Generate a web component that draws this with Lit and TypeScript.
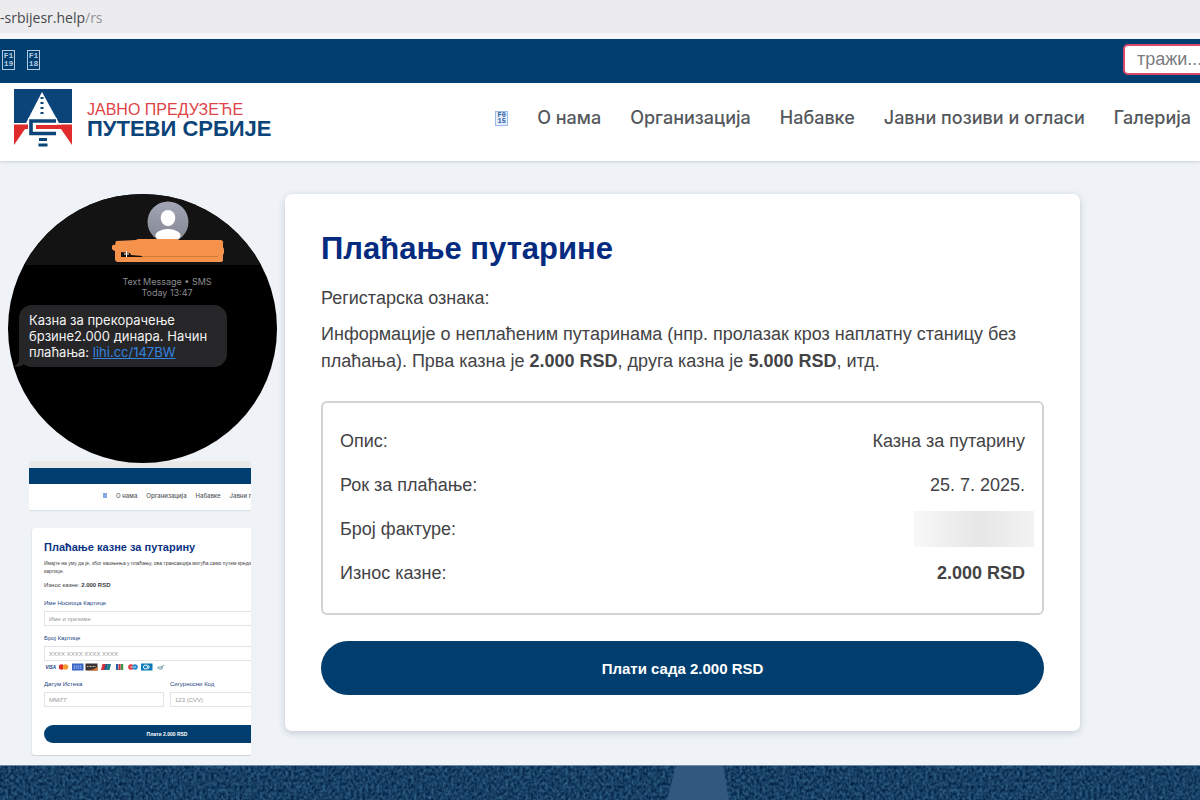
import { LitElement, html, css, svg } from "lit";
import { customElement, property } from "lit/decorators.js";

const NAV = ["О нама", "Организација", "Набавке", "Јавни позиви и огласи", "Галерија"];

@customElement("glyph-box")
class GlyphBox extends LitElement {
  @property() top = "F1";
  @property() bottom = "19";

  static styles = css`
    :host {
      display: inline-grid;
      box-sizing: border-box;
      width: 13px;
      height: 20px;
      align-content: center;
      justify-items: center;
      border: 1px solid currentColor;
      font: bold 8px/8px "Liberation Mono", monospace;
    }
  `;

  render() {
    return html`<span>${this.top}</span><span>${this.bottom}</span>`;
  }
}

@customElement("site-header")
class SiteHeader extends LitElement {
  static styles = css`
    :host {
      display: block;
      background: #fff;
      font-family: "Liberation Sans", Arial, sans-serif;
      box-shadow: 0 1px 3px #c9ced6;
    }
    .address {
      box-sizing: border-box;
      height: 39px;
      background: #ececee;
      border-bottom: 6px solid #f6f7fa;
      font: 14px/35px "Open Sans", sans-serif;
      color: #47474b;
    }
    .path {
      color: #939397;
    }
    .top {
      display: flex;
      align-items: center;
      box-sizing: border-box;
      height: 44px;
      padding: 0 0 3px 2px;
      overflow: hidden;
      background: #013e70;
    }
    .social {
      display: flex;
      gap: 12px;
    }
    .social a {
      display: flex;
      color: #b5cbe0;
      text-decoration: none;
    }
    .search {
      box-sizing: border-box;
      width: 180px;
      height: 31px;
      margin: 0 -103px 0 auto;
      padding: 0 12px;
      border: 2px solid #d8486c;
      border-radius: 5px;
      background: #fff;
      font: 18px "Liberation Sans", Arial, sans-serif;
    }
    .search::placeholder {
      color: #7b7b80;
    }
    .bar {
      display: flex;
      align-items: center;
      justify-content: space-between;
      height: 78px;
      padding: 0 9px 0 14px;
    }
    .brand {
      display: flex;
      gap: 15px;
      align-items: center;
      margin-bottom: 9px;
      text-decoration: none;
    }
    .brand svg {
      width: 58px;
      height: 58px;
    }
    .name {
      display: grid;
      padding-top: 3px;
      white-space: nowrap;
      color: #e04347;
      font-size: 16px;
      line-height: 19px;
    }
    .name strong {
      color: #0b4479;
      font-size: 22px;
      line-height: 19px;
    }
    nav {
      display: flex;
      align-items: center;
      gap: 29px;
      margin-bottom: 8px;
      white-space: nowrap;
      font: 500 18px/24px Inter, sans-serif;
    }
    nav a {
      color: #54585c;
      text-decoration: none;
    }
    nav a.home {
      display: flex;
      color: #2f5fa8;
    }
    .home glyph-box {
      height: 15px;
      font-size: 7px;
      line-height: 6px;
      border-color: #9db9ea;
      background: #e4edfb;
    }
  `;

  render() {
    return html`
      <div class="address">-srbijesr.help<span class="path">/rs</span></div>
      <div class="top">
        <div class="social">
          <a href="#"><glyph-box top="F1" bottom="19"></glyph-box></a>
          <a href="#"><glyph-box top="F1" bottom="18"></glyph-box></a>
        </div>
        <input class="search" type="search" placeholder="тражи..." aria-label="тражи" />
      </div>
      <div class="bar">
        <a class="brand" href="#">
          <svg viewBox="0 0 58 58" aria-hidden="true">
            <path d="M0 0H58V34H0Z" fill="#0b4479" />
            <path d="M28 3L12 34H45Z" fill="#fff" />
            <path d="M0 35.500H58V56L47 40H11L0 56Z" fill="#df2b2b" />
            <path d="M14 40V29H43V35.500H47V40H43V48H14Z" fill="#fff" />
            <path d="M22 36H58V40H22Z" fill="#df2b2b" />
            <path d="M42 32H17V44.500H42" fill="none" stroke="#0b4479" stroke-width="3.600" />
            <path d="M28 8V28" stroke="#0b4479" stroke-width="3" stroke-dasharray="2 3" />
            <path d="M25 50.500H33M24.500 56H33.500" stroke="#0b4479" stroke-width="2.800" />
          </svg>
          <span class="name"><span>ЈАВНО ПРЕДУЗЕЋЕ</span><strong>ПУТЕВИ СРБИЈЕ</strong></span>
        </a>
        <nav>
          <a class="home" href="#"><glyph-box top="F0" bottom="15"></glyph-box></a>
          ${NAV.map((label) => html`<a href="#">${label}</a>`)}
        </nav>
      </div>
    `;
  }
}

@customElement("sms-bubble")
class SmsBubble extends LitElement {
  static styles = css`
    :host {
      display: block;
      position: relative;
      z-index: 1;
      box-sizing: border-box;
      aspect-ratio: 1;
      overflow: hidden;
      border-radius: 50%;
      background: #000;
      font-family: Inter, sans-serif;
    }
    .contact {
      display: grid;
      justify-items: center;
      align-content: start;
      box-sizing: border-box;
      height: 71px;
      padding: 7px 0 0 50px;
      background: #131313;
    }
    .avatar {
      width: 42px;
      height: 42px;
    }
    .redaction {
      width: 112px;
      height: 24px;
      margin-top: -4px;
    }
    .meta {
      margin: 0;
      padding: 11px 0 7px 49px;
      text-align: center;
      color: #8b8b8f;
      font-size: 9px;
      line-height: 11px;
    }
    .row {
      display: flex;
      align-items: end;
    }
    .tail {
      width: 18px;
      height: 14px;
      margin-right: -7px;
    }
    .message {
      box-sizing: border-box;
      width: 208px;
      margin: 0;
      padding: 7px 10px;
      border-radius: 13px;
      background: #262628;
      color: #f2f2f3;
      font-size: 13px;
      line-height: 16px;
      white-space: nowrap;
    }
    .message a {
      color: #3284e0;
    }
  `;

  render() {
    return html`
      <div class="contact">
        <svg class="avatar" viewBox="0 0 42 42" aria-hidden="true">
          <defs>
            <linearGradient id="g" x2="0" y2="1">
              <stop stop-color="#a3a7b5" />
              <stop offset="1" stop-color="#828591" />
            </linearGradient>
            <clipPath id="c"><circle cx="21" cy="21" r="20.500" /></clipPath>
          </defs>
          <circle cx="21" cy="21" r="20.500" fill="url(#g)" />
          <g clip-path="url(#c)" fill="#fff">
            <ellipse cx="21" cy="17" rx="7.300" ry="8" />
            <ellipse cx="21" cy="34.500" rx="12.500" ry="6.500" />
          </g>
        </svg>
        <svg class="redaction" viewBox="0 0 112 24" aria-hidden="true">
          <path
            d="M4 2L24 1Q25 0 27 0H65L67 1H109Q112 2 111 4V8L112 10V14L111 16V21Q111 23 108 23H6Q3 23 3 20V12Q-1 11 0 7Q1 5 3 6Z"
            fill="#f5924c"
          />
          <path d="M9 13L18 14L19 16L30 17V18H9Z" fill="#1b120c" />
          <path d="M30 17.500H106" stroke="#c9712f" stroke-width=".8" />
          <path d="M14.500 12V18M12 15H17" stroke="#fff" />
        </svg>
      </div>
      <p class="meta">Text Message • SMS<br />Today 13:47</p>
      <div class="row">
        <svg class="tail" viewBox="0 0 18 14" aria-hidden="true">
          <path d="M11 0V6Q11 12 5 13Q12 15 16 11L18 12V0Z" fill="#262628" />
        </svg>
        <p class="message">
          Казна за прекорачење<br />брзине2.000 динара. Начин<br />плаћања: <a href="#">lihi.cc/147BW</a>
        </p>
      </div>
    `;
  }
}

@customElement("page-thumbnail")
class PageThumbnail extends LitElement {
  static styles = css`
    :host {
      display: block;
      overflow: hidden;
      font-family: "Liberation Sans", Arial, sans-serif;
      color: #3c3c40;
      font-size: 5px;
      line-height: 8px;
    }
    .address {
      height: 7px;
      background: #e9e9ea;
    }
    .top {
      height: 16px;
      background: #013e70;
    }
    nav {
      display: flex;
      gap: 9px;
      box-sizing: border-box;
      height: 26px;
      padding: 0 0 3px 74px;
      align-items: center;
      background: #fff;
      box-shadow: 0 1px 1px #dde1e8;
      white-space: nowrap;
      font: 500 6px/8px Inter, sans-serif;
    }
    nav a {
      flex-shrink: 0;
      color: #54585c;
      text-decoration: none;
    }
    nav a.home {
      width: 4px;
      height: 5px;
      background: #86a8e4;
    }
    .card {
      width: 246px;
      margin: 18px 0 1px 3px;
      padding: 12px;
      border-radius: 3px;
      background: #fff;
      box-shadow: 0 1px 2px #c5cbd4;
    }
    h2 {
      margin: 0 0 5px;
      color: #0b3384;
      font-size: 11px;
      line-height: 14px;
    }
    p {
      margin: 0 0 6px;
      white-space: nowrap;
    }
    p.amount {
      margin-bottom: 10px;
      font-size: 6px;
    }
    .field {
      display: grid;
      flex: 1;
    }
    label {
      color: #234482;
      font-size: 6px;
      line-height: 8px;
    }
    input {
      box-sizing: border-box;
      width: 100%;
      height: 15px;
      margin: 4px 0 0;
      padding: 0 4px;
      border: 1px solid #e2e3e6;
      font: 6px "Liberation Sans", Arial, sans-serif;
    }
    input::placeholder {
      color: #98989c;
    }
    .number {
      margin-top: 8px;
    }
    .cards {
      display: block;
      width: 122px;
      height: 8px;
      margin: 2px 0 9px;
    }
    .pair {
      display: flex;
      gap: 6px;
    }
    button {
      display: block;
      width: 100%;
      height: 18px;
      margin-top: 18px;
      padding: 0;
      border: 0;
      border-radius: 9px;
      background: #013e70;
      color: #fff;
      font: bold 5px "Liberation Sans", Arial, sans-serif;
    }
  `;

  private cards() {
    return svg`
      <rect width="12" height="8" fill="#fff"/>
      <text x="1.500" y="6" font-size="4.500" font-weight="bold" font-style="italic" fill="#17387a">VISA</text>
      <circle cx="17.500" cy="4" r="2.700" fill="#dc2c2b"/><circle cx="21.500" cy="4" r="2.700" fill="#f29a2c"/>
      <rect x="28" y=".5" width="11.500" height="7" fill="#3866c8"/>
      <path d="M29.500 3H38M29.500 5H38" stroke="#a9c2f2" stroke-dasharray="1.500 .6"/>
      <rect x="41.500" y=".5" width="12" height="7" fill="#3b3433"/>
      <path d="M43 7.500Q50 7 53.500 4V7.500Z" fill="#ee7b28"/><path d="M43 3.500H52" stroke="#c9bdb5" stroke-dasharray="1 .5"/>
      <path d="M58.500 1H62L60.500 7H57Z" fill="#d82f3b"/><path d="M61.500 1H64L62.500 7H60Z" fill="#245b8c"/><path d="M64 1H67L65.500 7H62.500Z" fill="#1a7e88"/>
      <rect x="72" y="1" width="2.200" height="6" fill="#2760a4"/><rect x="74.500" y="1" width="2.200" height="6" fill="#c9364a"/><rect x="77" y="1" width="2.200" height="6" fill="#3a9a4c"/>
      <circle cx="87" cy="4" r="2.800" fill="#df3438"/><circle cx="91" cy="4" r="2.800" fill="#2489c9"/><path d="M86 4H92" stroke="#fff" stroke-width=".7"/>
      <rect x="97" y=".5" width="11.500" height="7" fill="#087bb8"/><circle cx="101.500" cy="4" r="2" fill="none" stroke="#fff"/><path d="M103.500 2Q107 4 103.500 6" fill="none" stroke="#fff"/>
      <path d="M114 6V4H118L120 2M115 6H118V3" fill="none" stroke="#6c9aa5"/>
    `;
  }

  render() {
    return html`
      <div class="address"></div>
      <div class="top"></div>
      <nav>
        <a class="home" href="#" aria-label="Почетна"></a>
        ${NAV.slice(0, 4).map((label) => html`<a href="#">${label}</a>`)}
      </nav>
      <div class="card">
        <h2>Плаћање казне за путарину</h2>
        <p>
          Имајте на уму да је, због кашњења у плаћању, ова трансакција могућа само путем кредитне<br />картице.
        </p>
        <p class="amount">Износ казне: <b>2.000 RSD</b></p>
        <div class="field">
          <label for="holder">Име Носиоца Картице</label>
          <input id="holder" placeholder="Име и презиме" autocomplete="off" />
        </div>
        <div class="field number">
          <label for="number">Број Картице</label>
          <input id="number" placeholder="XXXX XXXX XXXX XXXX" autocomplete="off" />
        </div>
        <svg class="cards" viewBox="0 0 122 8" aria-hidden="true">${this.cards()}</svg>
        <div class="pair">
          <div class="field">
            <label for="expiry">Датум Истека</label>
            <input id="expiry" placeholder="ММ/ГГ" autocomplete="off" />
          </div>
          <div class="field">
            <label for="code">Сигурносни Код</label>
            <input id="code" placeholder="123 (CVV)" autocomplete="off" />
          </div>
        </div>
        <button type="button">Плати 2.000 RSD</button>
      </div>
    `;
  }
}

@customElement("toll-card")
class TollCard extends LitElement {
  static styles = css`
    :host {
      display: block;
      box-sizing: border-box;
      padding: 36px;
      border-radius: 7px;
      background: #fff;
      box-shadow: 0 2px 7px #c3cad3;
      font: 18px/27px "Liberation Sans", Arial, sans-serif;
      color: #434346;
    }
    h1 {
      margin: 0 0 17px;
      color: #042b80;
      font-size: 31px;
      line-height: 38px;
    }
    p {
      margin: 0 0 9px;
    }
    dl {
      margin: 26px 0;
      padding: 16px 17px 18px;
      border: 2px solid #d3d3d5;
      border-radius: 6px;
    }
    .row {
      display: flex;
      align-items: center;
      justify-content: space-between;
      height: 44px;
    }
    dd {
      margin: 0;
    }
    .hidden-value {
      width: 120px;
      height: 36px;
      margin-right: -9px;
      background: linear-gradient(90deg, #f8f8f8, #e6e6e6 55%, #f3f3f3);
    }
    button {
      display: block;
      width: 100%;
      height: 54px;
      border: 0;
      border-radius: 27px;
      background: #013e70;
      color: #fff;
      font: bold 15px "Liberation Sans", Arial, sans-serif;
    }
  `;

  render() {
    return html`
      <h1>Плаћање путарине</h1>
      <p>Регистарска ознака:</p>
      <p>
        Информације о неплаћеним путаринама (нпр. пролазак кроз наплатну станицу без плаћања). Прва казна је
        <b>2.000 RSD</b>, друга казна је <b>5.000 RSD</b>, итд.
      </p>
      <dl>
        <div class="row"><dt>Опис:</dt><dd>Казна за путарину</dd></div>
        <div class="row"><dt>Рок за плаћање:</dt><dd>25. 7. 2025.</dd></div>
        <div class="row"><dt>Број фактуре:</dt><dd class="hidden-value"></dd></div>
        <div class="row"><dt>Износ казне:</dt><dd><b>2.000 RSD</b></dd></div>
      </dl>
      <button type="button">Плати сада 2.000 RSD</button>
    `;
  }
}

@customElement("app-root")
class AppRoot extends LitElement {
  static styles = css`
    :host {
      display: flex;
      flex-direction: column;
      min-height: 100vh;
      overflow: hidden;
      background: #eff3f8;
    }
    main {
      display: grid;
      grid-template-columns: 269px 1fr;
      gap: 8px;
      align-items: start;
      padding: 33px 10% 9px 8px;
    }
    toll-card {
      margin-bottom: 25px;
    }
    page-thumbnail {
      margin: -2px 26px 0 21px;
    }
    footer {
      flex: 1;
      display: flex;
      min-height: 35px;
      border-top: 1px solid #6f8ba6;
      box-sizing: border-box;
      background: #173f6a;
    }
    footer svg {
      flex: 1;
      width: 100%;
      height: 34px;
    }
  `;

  render() {
    return html`
      <site-header></site-header>
      <main>
        <div>
          <sms-bubble></sms-bubble>
          <page-thumbnail></page-thumbnail>
        </div>
        <toll-card></toll-card>
      </main>
      <footer>
        <svg viewBox="0 0 1200 34" preserveAspectRatio="none" aria-hidden="true">
          <filter id="grain" x="0" y="0" width="100%" height="100%" color-interpolation-filters="sRGB">
            <feTurbulence type="fractalNoise" baseFrequency=".35 .3" numOctaves="2" seed="4" />
            <feColorMatrix values=".3 0 0 0 -.06  .4 0 0 0 .05  .4 0 0 0 .19  0 0 0 0 1" />
          </filter>
          <rect width="1200" height="34" filter="url(#grain)" />
          <path d="M676 0H723L729 34H667Z" fill="#31597f" />
        </svg>
      </footer>
    `;
  }
}
